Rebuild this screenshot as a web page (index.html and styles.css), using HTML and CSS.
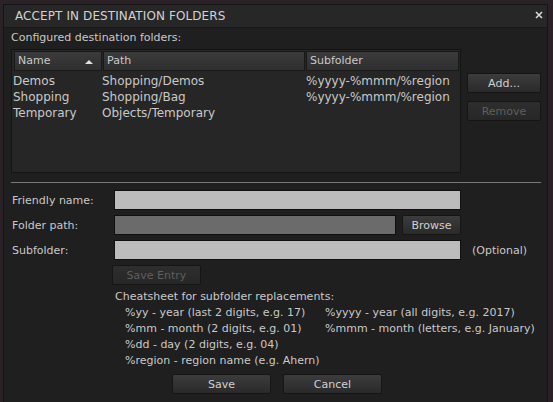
FILE: index.html
```html
<!DOCTYPE html>
<html>
<head>
<meta charset="utf-8">
<link rel="stylesheet" href="styles.css">
</head>
<body>
<div class="dialog">
  <div class="titlebar">
    <span class="title">ACCEPT IN DESTINATION FOLDERS</span>
    <svg class="close" width="8" height="8" viewBox="0 0 8 8"><path d="M1 1L7 7M7 1L1 7" stroke="#d8d8d8" stroke-width="1.6"/></svg>
  </div>
  <div class="body">
    <div class="caption">Configured destination folders:</div>
    <div class="toprow">
      <div class="table">
        <div class="thead">
          <div class="th c1">Name<span class="sort"></span></div>
          <div class="th c2">Path</div>
          <div class="th c3">Subfolder</div>
        </div>
        <div class="rows">
          <div class="row"><span class="c1">Demos</span><span class="c2">Shopping/Demos</span><span class="c3">%yyyy-%mmm/%region</span></div>
          <div class="row"><span class="c1">Shopping</span><span class="c2">Shopping/Bag</span><span class="c3">%yyyy-%mmm/%region</span></div>
          <div class="row"><span class="c1">Temporary</span><span class="c2">Objects/Temporary</span><span class="c3"></span></div>
        </div>
      </div>
      <div class="sidebtns">
        <div class="btn side">Add...</div>
        <div class="btn side disabled">Remove</div>
      </div>
    </div>
    <div class="sep"></div>
    <div class="form">
      <div class="frow"><span class="lbl">Friendly name:</span><div class="input full"></div></div>
      <div class="frow"><span class="lbl">Folder path:</span><div class="input path"></div><div class="btn browse">Browse</div></div>
      <div class="frow"><span class="lbl">Subfolder:</span><div class="input full"></div><span class="opt">(Optional)</span></div>
      <div class="frow"><span class="lbl"></span><div class="btn saveentry disabled">Save Entry</div></div>
    </div>
    <div class="cheat">
      <div class="cheat-title">Cheatsheet for subfolder replacements:</div>
      <div class="cheat-grid">
        <span>%yy - year (last 2 digits, e.g. 17)</span><span>%yyyy - year (all digits, e.g. 2017)</span>
        <span>%mm - month (2 digits, e.g. 01)</span><span>%mmm - month (letters, e.g. January)</span>
        <span>%dd - day (2 digits, e.g. 04)</span><span></span>
        <span>%region - region name (e.g. Ahern)</span><span></span>
      </div>
    </div>
    <div class="bottom">
      <div class="btn big">Save</div>
      <div class="btn big">Cancel</div>
    </div>
  </div>
</div>
</body>
</html>
```
FILE: styles.css
```css
html, body { margin: 0; padding: 0; }
body {
  width: 553px; height: 402px; overflow: hidden;
  background: #2a2226;
  font-family: "DejaVu Sans", sans-serif;
  font-size: 11px;
  color: #c9c9c9;
}
.dialog {
  margin: 4px 0 0 3px;
  width: 545px; height: 400px;
  background: #1f1f1f;
  box-sizing: border-box;
  border: 1px solid #141414;
}
.titlebar {
  height: 23px;
  box-sizing: border-box;
  background: #272727;
  border-bottom: 1px solid #181818;
  display: flex; align-items: center; justify-content: space-between;
  padding: 0 4px 0 11px;
}
.title { font-size: 12px; color: #d2d2d2; letter-spacing: 0.1px; }
.close { margin-top: -2px; }
.body { padding: 3px 3px 0 7px; }
.caption { height: 14px; line-height: 14px; }
.toprow { display: flex; margin-top: 4px; }
.table {
  width: 450px; height: 124px;
  background: #262626;
  border: 1px solid #141414;
  box-sizing: border-box;
}
.thead { display: flex; height: 20px; padding: 1px 0 0 2px; gap: 1px; }
.th {
  background: linear-gradient(#3b3b3b, #2f2f2f);
  border: 1px solid #181818;
  box-sizing: border-box;
  height: 20px; line-height: 18px;
  padding-left: 3px;
  position: relative;
}
.th.c1 { width: 88px; }
.th.c2 { width: 202px; }
.th.c3 { width: 153px; }
.sort {
  position: absolute; right: 8px; top: 8px;
  width: 0; height: 0;
  border-left: 4px solid transparent; border-right: 4px solid transparent;
  border-bottom: 4px solid #e0e0e0;
}
.rows { margin-top: 2px; }
.row { display: flex; height: 16px; line-height: 16px; font-size: 12px; white-space: nowrap; }
.row .c1 { width: 89px; padding-left: 1px; }
.row .c2 { width: 204px; }
.row .c3 { width: 150px; }
.sidebtns { display: flex; flex-direction: column; gap: 8px; margin: 24px 0 0 6px; }
.btn {
  background: linear-gradient(#3c3c3c, #2a2a2a);
  border: 1px solid #151515;
  border-radius: 2px;
  box-sizing: border-box;
  display: flex; align-items: center; justify-content: center;
  color: #d0d0d0;
}
.btn.disabled { color: #5f5f5f; background: linear-gradient(#2e2e2e, #272727); }
.side { width: 74px; height: 20px; }
.sep { height: 1px; background: #7a7a7a; margin: 9px 3px 0 0; }
.form { display: flex; flex-direction: column; gap: 5px; margin-top: 7px; }
.frow { display: flex; align-items: center; height: 20px; }
.lbl { width: 102px; padding-left: 1px; }
.input {
  height: 20px; box-sizing: border-box;
  background: #bcbcbc;
  border: 1px solid #101010;
}
.input.full { width: 347px; }
.input.path { width: 282px; background: #6b6b6b; }
.browse { width: 59px; height: 20px; margin-left: 6px; }
.opt { margin-left: 11px; }
.saveentry { width: 89px; height: 20px; margin-left: -2px; }
.cheat { margin: 4px 0 0 104px; }
.cheat-title { height: 16px; line-height: 16px; }
.cheat-grid {
  display: grid; grid-template-columns: 200px auto;
  margin-left: 10px;
}
.cheat-grid span { height: 16px; line-height: 16px; }
.bottom { display: flex; gap: 12px; margin: 5px 0 0 161px; }
.big { width: 99px; height: 20px; }
```
